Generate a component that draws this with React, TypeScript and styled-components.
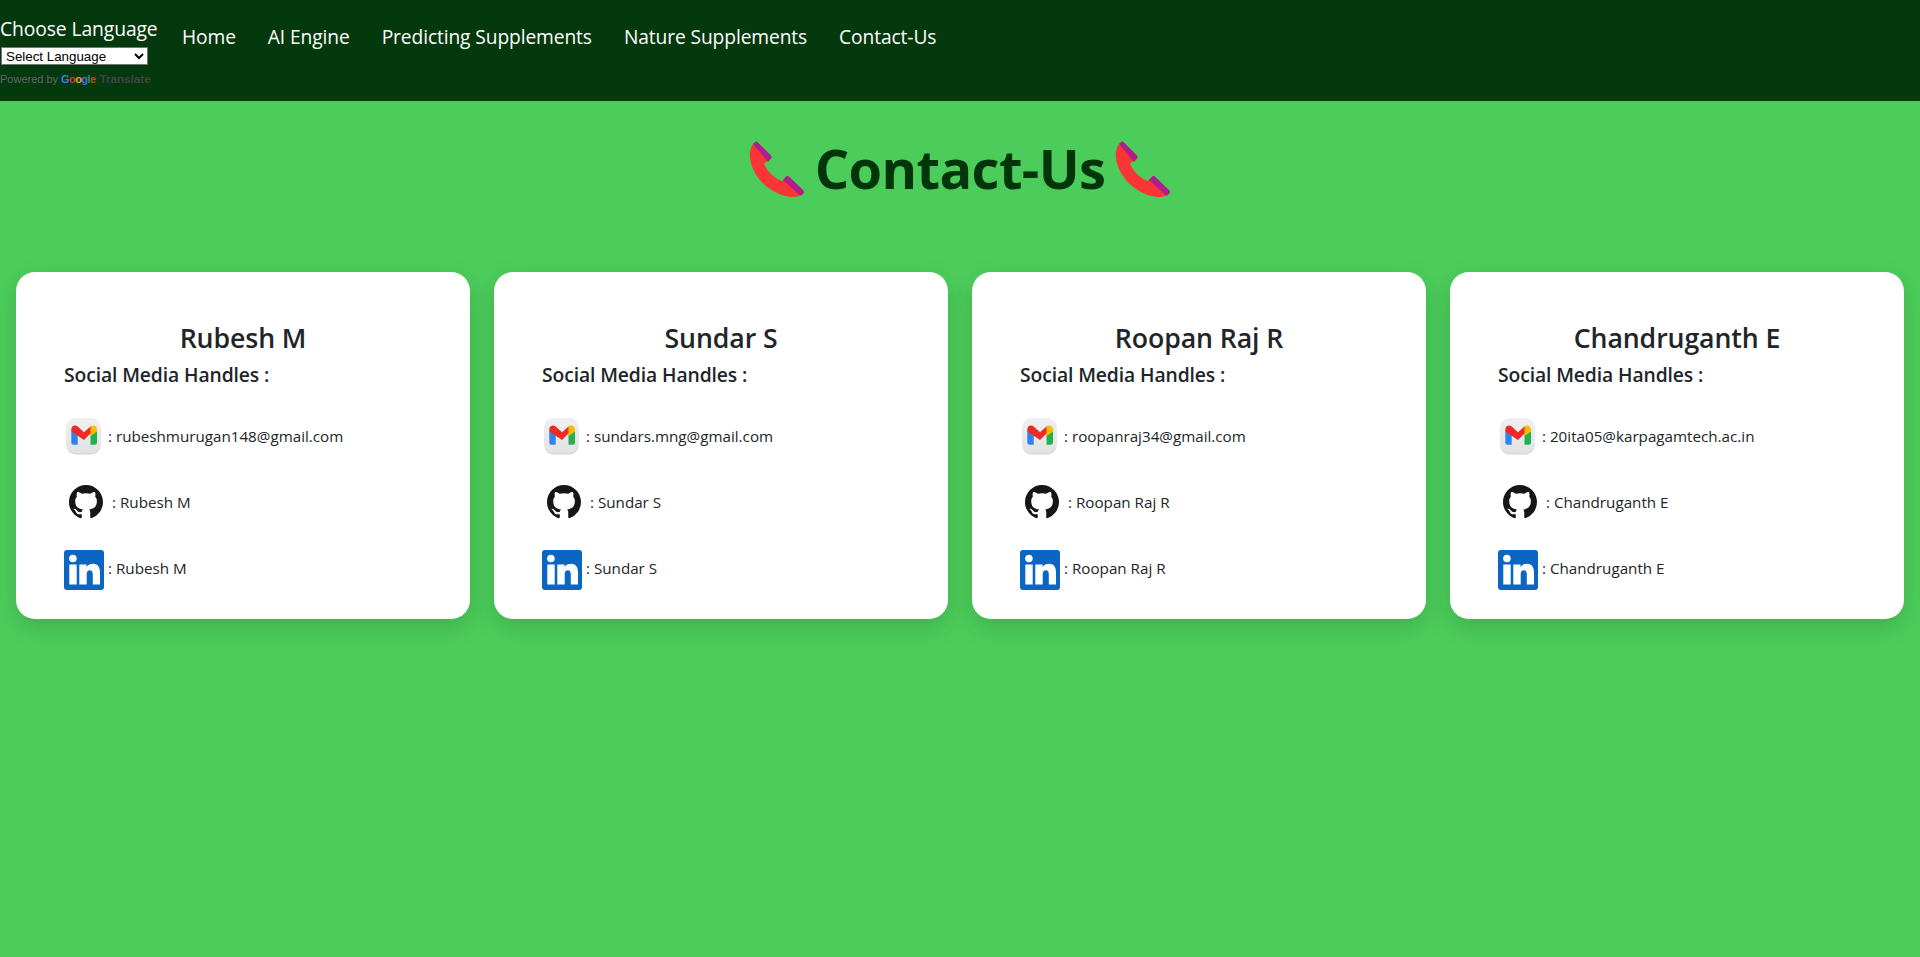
import React from "react";
import styled, { createGlobalStyle } from "styled-components";

const Global = createGlobalStyle`
  html, body { margin: 0; padding: 0; }
  body {
    background: #4ccd5b;
    color: #212529;
    font-family: "Open Sans", "Noto Sans", sans-serif;
    min-height: 957px;
    overflow: hidden;
  }
`;

const Navbar = styled.nav`
  height: 101px;
  background: #04380d;
  display: flex;
  align-items: flex-start;
  box-sizing: border-box;
`;
const LangBox = styled.div`
  width: 182px;
  flex: none;
  display: flex;
  flex-direction: column;
  align-items: flex-start;
  padding-top: 17px;
`;
const LangLabel = styled.div`
  color: #fff;
  font-size: 19.3px;
  line-height: 24px;
  letter-spacing: -0.1px;
  white-space: nowrap;
`;
const LangSelect = styled.select`
  margin: 6px 0 0 1px;
  width: 147px;
  height: 18px;
  padding: 0;
  font-family: "Liberation Sans", Arial, sans-serif;
  font-size: 13.33px;
  background: #fff;
  color: #000;
  border: 1px solid #767676;
  box-sizing: border-box;
  border-radius: 0;
`;
const Powered = styled.div`
  margin-top: 7px;
  display: flex;
  align-items: center;
  font-family: "Liberation Sans", Arial, sans-serif;
  font-size: 11px;
  line-height: 14px;
  color: #666;
  white-space: nowrap;
`;
const GoogleWord = styled.span`
  margin: 0 4px 0 3px;
  font-size: 11px;
  font-weight: 700;
  letter-spacing: -0.6px;
`;
const GoogleLetter = styled.span<{ $c: string }>`
  color: ${(p) => p.$c};
`;
const TranslateWord = styled.span`
  color: #444;
  font-size: 11.7px;
  font-weight: 700;
`;
const NavList = styled.div`
  display: flex;
  align-items: center;
  gap: 32px;
  padding-top: 23px;
`;
const NavLink = styled.a`
  color: #fff;
  font-size: 19.2px;
  line-height: 28px;
  text-decoration: none;
  white-space: nowrap;
  letter-spacing: -0.1px;
`;
const TitleRow = styled.div`
  display: flex;
  justify-content: center;
  align-items: center;
  gap: 10px;
  margin-top: 35px;
  height: 70px;
`;
const Title = styled.h1`
  margin: 0 0 6px;
  font-size: 54.2px;
  font-weight: 700;
  line-height: 70px;
  color: #03350c;
  letter-spacing: -0.6px;
`;
const Phone = styled.svg`
  width: 70px;
  height: 70px;
  flex: none;
  margin: 0 -10px 2px -4px;
`;
const CardGrid = styled.div`
  display: grid;
  grid-template-columns: repeat(4, 1fr);
  gap: 24px;
  padding: 0 16px;
  margin-top: 66px;
`;
const Card = styled.div`
  height: 347px;
  background: #fff;
  border-radius: 19px;
  box-shadow: 0 8px 24px rgba(0, 0, 0, 0.15);
  padding: 49px 48px 0;
  box-sizing: border-box;
`;
const Name = styled.h3`
  margin: 0;
  font-size: 26.7px;
  line-height: 34px;
  font-weight: 600;
  text-align: center;
  letter-spacing: -0.1px;
`;
const Handles = styled.h5`
  margin: 8px 0 0;
  font-size: 19.3px;
  line-height: 24px;
  font-weight: 600;
  letter-spacing: -0.1px;
`;
const Rows = styled.div`
  margin-top: 16px;
  display: flex;
  flex-direction: column;
`;
const Row = styled.div<{ $pad: number; $gap: number }>`
  height: 66px;
  display: flex;
  align-items: center;
  gap: ${(p) => p.$gap}px;
  padding-left: ${(p) => p.$pad}px;
  font-size: 15.2px;
  color: #212529;
  white-space: nowrap;
`;
const Icon = styled.svg<{ $w: number; $h: number; $top?: number }>`
  width: ${(p) => p.$w}px;
  height: ${(p) => p.$h}px;
  flex: none;
  margin-top: ${(p) => p.$top ?? 0}px;
`;

const PhoneIcon = () => (
  <Phone viewBox="0 0 70 70">
    <path
      d="M8 9 C3 16 4 27 10 38 C18 52 34 62 49 62 C52 62 55 61 56 59 L40 43 L37 46 C30 44 22 36 19 29 L23 25 Z"
      fill="#fb3535"
    />
    <path
      d="M8 9 L10 7 Q11.500 6 13 7.500 L26 20.500 Q27.500 22 26 23.500 L23 27 Z"
      fill="#b01d8c"
    />
    <path
      d="M38 45 L41 41.500 Q42.500 40 44 41.500 L58.500 55.500 Q60 57 58.500 58.500 L55.500 61 Z"
      fill="#b01d8c"
    />
  </Phone>
);

const GmailIcon = () => (
  <Icon $w={36} $h={38} viewBox="0 0 36 38">
    <defs>
      <linearGradient id="gmailBg" x1="0" y1="0" x2="0" y2="1">
        <stop offset="0" stopColor="#f0f0f0" />
        <stop offset="1" stopColor="#e2e2e2" />
      </linearGradient>
    </defs>
    <rect x="0.500" y="1.500" width="34" height="36" rx="9" fill="#d2d2d2" />
    <rect x="0.500" y="1" width="34" height="35.500" rx="9" fill="url(#gmailBg)" />
    <path d="M5.300 14 L5.300 25.500 Q5.300 27.700 7.500 27.700 L11.700 27.700 L11.700 16 Z" fill="#2f83f0" />
    <path d="M24.500 16 L24.500 27.700 L28.800 27.700 Q31 27.700 31 25.500 L31 14 Z" fill="#22b24c" />
    <path d="M5.300 14.500 L5.300 12.500 C5.300 8.800 9 7.500 11.700 9.500 L18 15.300 L24.500 9.500 L26 9 L26 15 L18 23 Z" fill="#ee2a26" />
    <path d="M24.500 9.500 C27 7.500 31 8.800 31 12.500 L31 14.500 L24.500 19 Z" fill="#fbbc04" />
  </Icon>
);

const GithubIcon = () => (
  <Icon $w={34} $h={34} viewBox="0 0 16 16">
    <path
      fill="#161616"
      d="M8 0C3.58 0 0 3.58 0 8c0 3.54 2.29 6.53 5.47 7.59.4.07.55-.17.55-.38 0-.19-.01-.82-.01-1.49-2.01.37-2.53-.49-2.69-.94-.09-.23-.48-.94-.82-1.13-.28-.15-.68-.52-.01-.53.63-.01 1.08.58 1.23.82.72 1.21 1.87.87 2.33.66.07-.52.28-.87.51-1.07-1.78-.2-3.64-.89-3.64-3.95 0-.87.31-1.59.82-2.15-.08-.2-.36-1.02.08-2.12 0 0 .67-.21 2.2.82.64-.18 1.32-.27 2-.27s1.36.09 2 .27c1.53-1.04 2.2-.82 2.2-.82.44 1.1.16 1.92.08 2.12.51.56.82 1.27.82 2.15 0 3.07-1.87 3.75-3.65 3.95.29.25.54.73.54 1.48 0 1.07-.01 1.93-.01 2.2 0 .21.15.46.55.38A8.01 8.01 0 0 0 16 8c0-4.42-3.58-8-8-8z"
    />
  </Icon>
);

const LinkedinIcon = () => (
  <Icon $w={40} $h={40} $top={4} viewBox="0 0 40 40">
    <rect width="40" height="40" rx="3" fill="#0a66c2" />
    <circle cx="8.900" cy="8.500" r="3.800" fill="#fff" />
    <rect x="5.300" y="14.500" width="7.400" height="20" fill="#fff" />
    <path
      fill="#fff"
      d="M15.300 14.500 H22.500 V17 C24 15 26.300 13.800 29 13.800 C34.500 13.800 36 17.800 36 23 V34.500 H28.800 V24.500 C28.800 22 28 20.300 25.800 20.300 C23.500 20.300 22.700 22 22.700 24.500 V34.500 H15.300 Z"
    />
  </Icon>
);

const people = [
  { name: "Rubesh M", email: "rubeshmurugan148@gmail.com" },
  { name: "Sundar S", email: "sundars.mng@gmail.com" },
  { name: "Roopan Raj R", email: "roopanraj34@gmail.com" },
  { name: "Chandruganth E", email: "20ita05@karpagamtech.ac.in" },
];

export default function App() {
  return (
    <>
      <Global />
      <Navbar>
        <LangBox>
          <LangLabel>Choose Language</LangLabel>
          <LangSelect defaultValue="">
            <option value="">Select Language</option>
          </LangSelect>
          <Powered>
            Powered by
            <GoogleWord>
              <GoogleLetter $c="#3b78e7">G</GoogleLetter>
              <GoogleLetter $c="#d9382e">o</GoogleLetter>
              <GoogleLetter $c="#e6a710">o</GoogleLetter>
              <GoogleLetter $c="#3b78e7">g</GoogleLetter>
              <GoogleLetter $c="#2d9b48">l</GoogleLetter>
              <GoogleLetter $c="#d9382e">e</GoogleLetter>
            </GoogleWord>
            <TranslateWord>Translate</TranslateWord>
          </Powered>
        </LangBox>
        <NavList>
          <NavLink>Home</NavLink>
          <NavLink>AI Engine</NavLink>
          <NavLink>Predicting Supplements</NavLink>
          <NavLink>Nature Supplements</NavLink>
          <NavLink>Contact-Us</NavLink>
        </NavList>
      </Navbar>
      <TitleRow>
        <PhoneIcon />
        <Title>Contact-Us</Title>
        <PhoneIcon />
      </TitleRow>
      <CardGrid>
        {people.map((p) => (
          <Card key={p.name}>
            <Name>{p.name}</Name>
            <Handles>Social Media Handles :</Handles>
            <Rows>
              <Row $pad={2} $gap={6}>
                <GmailIcon />
                <span>: {p.email}</span>
              </Row>
              <Row $pad={5} $gap={9}>
                <GithubIcon />
                <span>: {p.name}</span>
              </Row>
              <Row $pad={0} $gap={4}>
                <LinkedinIcon />
                <span>: {p.name}</span>
              </Row>
            </Rows>
          </Card>
        ))}
      </CardGrid>
    </>
  );
}
